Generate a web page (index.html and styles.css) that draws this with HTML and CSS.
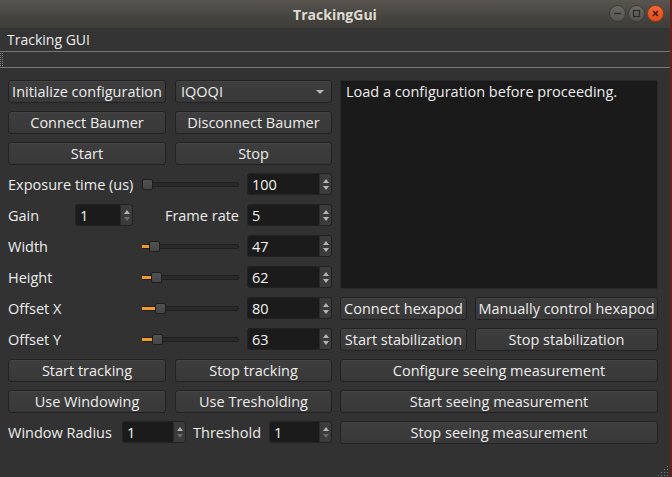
FILE: index.html
```html
<!DOCTYPE html>
<html>
<head>
<meta charset="utf-8">
<title>TrackingGui</title>
<link rel="stylesheet" href="styles.css">
</head>
<body>
<div class="window">
  <header class="titlebar">
    <span class="title">TrackingGui</span>
    <div class="wm-buttons">
      <span class="wm wm-min"><svg width="9" height="9" viewBox="0 0 9 9"><path d="M1 4.5h7" stroke="#2c2c2a" stroke-width="1.4"/></svg></span>
      <span class="wm wm-max"><svg width="9" height="9" viewBox="0 0 9 9"><rect x="1.5" y="1.5" width="6" height="6" fill="none" stroke="#2c2c2a" stroke-width="1.2"/></svg></span>
      <span class="wm wm-close"><svg width="9" height="9" viewBox="0 0 9 9"><path d="M2 2l5 5M7 2l-5 5" stroke="#3a1408" stroke-width="1.3"/></svg></span>
    </div>
  </header>
  <nav class="menubar"><span class="menu-item">Tracking GUI</span></nav>
  <div class="toolbar"><svg class="tb-handle" width="4" height="15" viewBox="0 0 4 15" fill="#7c7c7c"><rect x="0" y="1" width="1" height="1"/><rect x="2" y="1" width="1" height="1"/><rect x="0" y="3" width="1" height="1"/><rect x="2" y="3" width="1" height="1"/><rect x="0" y="5" width="1" height="1"/><rect x="2" y="5" width="1" height="1"/><rect x="0" y="7" width="1" height="1"/><rect x="2" y="7" width="1" height="1"/><rect x="0" y="9" width="1" height="1"/><rect x="2" y="9" width="1" height="1"/><rect x="0" y="11" width="1" height="1"/><rect x="2" y="11" width="1" height="1"/><rect x="0" y="13" width="1" height="1"/><rect x="2" y="13" width="1" height="1"/></svg></div>

  <main class="content">
    <section class="left">
      <div class="row pair">
        <button class="btn">Initialize configuration</button>
        <div class="combo"><span>IQOQI</span><svg class="combo-arrow" width="8" height="5" viewBox="0 0 8 5"><path d="M0 0h8L4 4z" fill="#b8b8b8"/></svg></div>
      </div>
      <div class="row pair">
        <button class="btn">Connect Baumer</button>
        <button class="btn">Disconnect Baumer</button>
      </div>
      <div class="row pair">
        <button class="btn">Start</button>
        <button class="btn">Stop</button>
      </div>

      <div class="row slider-row">
        <span class="label">Exposure time (us)</span>
        <div class="slider"><span class="groove"></span><span class="handle" style="left:0px"></span></div>
        <div class="spin"><span class="val">100</span><span class="arrows"><i class="up"></i><i class="down"></i></span></div>
      </div>

      <div class="row gain-row">
        <span class="label">Gain</span>
        <div class="spin"><span class="val">1</span><span class="arrows"><i class="up"></i><i class="down dim"></i></span></div>
        <span class="label end">Frame rate</span>
        <div class="spin"><span class="val">5</span><span class="arrows"><i class="up"></i><i class="down"></i></span></div>
      </div>

      <div class="row slider-row">
        <span class="label">Width</span>
        <div class="slider"><span class="groove"></span><span class="fill" style="width:8px"></span><span class="handle" style="left:7px"></span></div>
        <div class="spin"><span class="val">47</span><span class="arrows"><i class="up"></i><i class="down"></i></span></div>
      </div>
      <div class="row slider-row">
        <span class="label">Height</span>
        <div class="slider"><span class="groove"></span><span class="fill" style="width:10px"></span><span class="handle" style="left:9px"></span></div>
        <div class="spin"><span class="val">62</span><span class="arrows"><i class="up"></i><i class="down"></i></span></div>
      </div>
      <div class="row slider-row">
        <span class="label">Offset X</span>
        <div class="slider"><span class="groove"></span><span class="fill" style="width:14px"></span><span class="handle" style="left:13px"></span></div>
        <div class="spin"><span class="val">80</span><span class="arrows"><i class="up"></i><i class="down"></i></span></div>
      </div>
      <div class="row slider-row">
        <span class="label">Offset Y</span>
        <div class="slider"><span class="groove"></span><span class="fill" style="width:11px"></span><span class="handle" style="left:10px"></span></div>
        <div class="spin"><span class="val">63</span><span class="arrows"><i class="up"></i><i class="down"></i></span></div>
      </div>

      <div class="row pair">
        <button class="btn">Start tracking</button>
        <button class="btn">Stop tracking</button>
      </div>
      <div class="row pair">
        <button class="btn">Use Windowing</button>
        <button class="btn">Use Tresholding</button>
      </div>
      <div class="row radius-row">
        <span class="label">Window Radius</span>
        <div class="spin"><span class="val">1</span><span class="arrows"><i class="up"></i><i class="down dim"></i></span></div>
        <span class="label pad">Threshold</span>
        <div class="spin"><span class="val">1</span><span class="arrows"><i class="up"></i><i class="down dim"></i></span></div>
      </div>
    </section>

    <section class="side">
      <div class="log">Load a configuration before proceeding.</div>
      <div class="row hexa-row">
        <button class="btn">Connect hexapod</button>
        <button class="btn">Manually control hexapod</button>
      </div>
      <div class="row hexa-row">
        <button class="btn">Start stabilization</button>
        <button class="btn">Stop stabilization</button>
      </div>
      <button class="btn row">Configure seeing measurement</button>
      <button class="btn row">Start seeing measurement</button>
      <button class="btn row">Stop seeing measurement</button>
    </section>
  </main>
  <span class="grip"><svg width="12" height="12" viewBox="0 0 12 12" fill="#7e7e7e"><rect x="10" y="1" width="1" height="1"/><rect x="7" y="4" width="1" height="1"/><rect x="10" y="4" width="1" height="1"/><rect x="4" y="7" width="1" height="1"/><rect x="7" y="7" width="1" height="1"/><rect x="10" y="7" width="1" height="1"/><rect x="1" y="10" width="1" height="1"/><rect x="4" y="10" width="1" height="1"/><rect x="7" y="10" width="1" height="1"/><rect x="10" y="10" width="1" height="1"/></svg></span>
</div>
</body>
</html>
```
FILE: styles.css
```css
* { box-sizing: border-box; }
html, body { margin: 0; padding: 0; background: #323232; }
body {
  width: 672px; height: 477px; overflow: hidden;
  font-family: "Open Sans", "Noto Sans", sans-serif;
  font-size: 14.5px; color: #ececec;
}
.window {
  position: relative;
  width: 672px; height: 477px;
  background: #323232;
  border-right: 2px solid #6e1d1f;
  display: flex; flex-direction: column;
}
.titlebar {
  position: relative;
  height: 28px; flex: none;
  background: linear-gradient(#58554f, #46443f 60%, #3d3c38);
  display: flex; align-items: center; justify-content: center;
}
.title { font-weight: bold; font-size: 14px; color: #dfdbd2; }
.wm-buttons {
  position: absolute; right: 6px; top: 5px;
  display: flex; gap: 2px;
}
.wm {
  width: 17px; height: 17px; border-radius: 50%;
  display: flex; align-items: center; justify-content: center;
  background: linear-gradient(#6a6964, #55544f);
  border: 1px solid #3a3935;
}
.wm-close { background: linear-gradient(#f0683a, #df4f1c); border-color: #9b3412; }
.menubar {
  height: 23px; flex: none;
  background: #343434;
  display: flex; align-items: center;
  padding-left: 7px;
  font-size: 14px;
}
.toolbar {
  height: 17px; flex: none;
  border-top: 1px solid #777;
  border-bottom: 1px solid #777;
  background: #343434;
  display: flex;
}
.tb-handle { display: block; }
.content {
  display: flex; gap: 8px;
  padding: 12px 0 0 8px;
}
.left, .side {
  display: flex; flex-direction: column; gap: 8px;
}
.left { width: 324px; }
.side { width: 318px; }
.row { height: 23px; flex: none; }
.pair { display: grid; grid-template-columns: 158px 157px; column-gap: 9px; }
.hexa-row { display: grid; grid-template-columns: 127px 183px; column-gap: 8px; }
.btn {
  font: inherit; color: #ececec;
  height: 23px; padding: 0;
  background: linear-gradient(#3e3e3e, #383838);
  border: 1px solid #222;
  border-radius: 3px;
  box-shadow: inset 0 1px 0 #444;
  white-space: nowrap;
  overflow: hidden;
}
.combo {
  height: 23px;
  display: flex; align-items: center; justify-content: space-between;
  padding: 0 7px 0 5px;
  background: linear-gradient(#3e3e3e, #383838);
  border: 1px solid #222;
  border-radius: 3px;
  box-shadow: inset 0 1px 0 #444;
}
.combo-arrow { margin-top: 1px; }
.label { display: flex; align-items: center; white-space: nowrap; }
.label.end { justify-content: flex-end; padding-right: 8px; }
.label.pad { padding-left: 7px; }
.slider-row { display: grid; grid-template-columns: 134px 97px 93px; }
.slider-row .spin { margin-left: 8px; }
.gain-row { display: grid; grid-template-columns: 67px 58px 114px 85px; }
.radius-row { display: grid; grid-template-columns: 114px 64px 83px 63px; }
.slider { position: relative; height: 23px; }
.groove {
  position: absolute; left: 0; right: 0; top: 9px;
  height: 5px;
  background: #2a2a2a;
  border: 1px solid #1f1f1f;
  border-radius: 2px;
}
.fill {
  position: absolute; left: 0; top: 10px;
  height: 3px;
  background: #f29a2a;
}
.handle {
  position: absolute; top: 6px;
  width: 11px; height: 11px;
  background: linear-gradient(#525252, #454545);
  border: 1px solid #1e1e1e;
  border-radius: 2px;
}
.spin {
  height: 22px;
  display: flex;
  background: #1b1b1b;
  border: 1px solid #222;
  border-radius: 3px;
  overflow: hidden;
}
.spin .val {
  flex: 1;
  display: flex; align-items: center;
  padding-left: 4px;
  color: #f2f2f2;
}
.arrows {
  width: 12px; flex: none;
  display: flex; flex-direction: column; justify-content: center; align-items: center;
  gap: 3px;
  background: #3b3b3b;
  border-left: 1px solid #2a2a2a;
}
.arrows i {
  width: 0; height: 0;
  border-left: 3.5px solid transparent;
  border-right: 3.5px solid transparent;
}
.arrows .up { border-bottom: 4px solid #b5b5b5; }
.arrows .down { border-top: 4px solid #b5b5b5; }
.arrows .down.dim { border-top-color: #6a6a6a; }
.log {
  height: 209px;
  background: #1a1a1a;
  border: 1px solid #2a2a2a;
  padding: 2px 5px;
  line-height: 1.25;
  color: #ececec;
}
.grip { position: absolute; right: 1px; bottom: 0; width: 12px; height: 12px; line-height: 0; }
```
